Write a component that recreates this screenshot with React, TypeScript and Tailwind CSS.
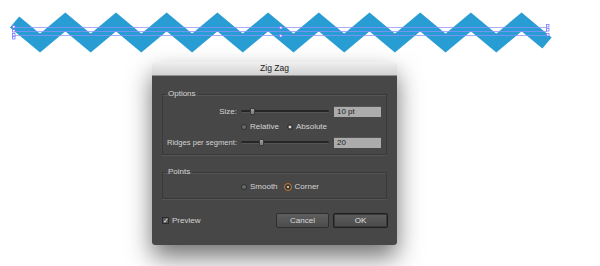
const font = { fontFamily: '"Liberation Sans", Arial, sans-serif' };

function Zigzag() {
  const pts: string[] = [];
  for (let k = 0; k <= 21; k++) {
    const x = 14.6 + 25.35 * k;
    const y = k % 2 === 0 ? 22 : 43;
    pts.push(`${x.toFixed(1)},${y}`);
  }
  const handles = [
    [12, 25], [12, 29], [12, 33], [12, 36],
    [279, 26], [279, 34],
    [546, 24], [546, 28], [546, 33],
  ];
  return (
    <svg width="600" height="62" viewBox="0 0 600 62" className="block">
      <polyline
        points={pts.join(" ")}
        fill="none"
        stroke="#289dd4"
        strokeWidth="14.5"
        strokeLinejoin="miter"
        strokeLinecap="butt"
      />
      <g stroke="#8f8fff" strokeWidth="1" opacity="0.75">
        <line x1="13" y1="27.5" x2="547" y2="27.5" />
        <line x1="13" y1="31.5" x2="547" y2="31.5" />
        <line x1="13" y1="35.5" x2="547" y2="35.5" />
      </g>
      <g fill="white" stroke="#7b7bff" strokeWidth="0.8">
        {handles.map(([x, y], i) => (
          <rect key={i} x={x + 0.5} y={y + 0.5} width="2.5" height="2.5" />
        ))}
      </g>
    </svg>
  );
}

function Slider({ pos }: { pos: number }) {
  return (
    <div className="relative flex h-[11px] w-[88px] items-center">
      <div className="h-[3px] w-full rounded-full border-b border-[#555] bg-[#262626]" />
      <div
        className="absolute top-[2px] h-[7px] w-[5px] rounded-[1px] border border-[#3a3a3a] bg-gradient-to-b from-[#a0a0a0] to-[#7a7a7a]"
        style={{ left: pos }}
      />
    </div>
  );
}

function Field({ value }: { value: string }) {
  return (
    <div className="flex h-[11px] w-[47px] items-center border-t border-[#555] bg-[#acacac] pl-[3px] text-[8px] leading-none text-[#1c1c1c]">
      {value}
    </div>
  );
}

function Radio({ checked, accent }: { checked?: boolean; accent?: boolean }) {
  if (accent) {
    return (
      <span className="flex h-[8px] w-[8px] items-center justify-center rounded-full border border-[#d0782a] bg-[#3a3a3a]">
        <span className="h-[2px] w-[2px] rounded-full bg-[#e8e8e8]" />
      </span>
    );
  }
  return (
    <span className="flex h-[6px] w-[6px] items-center justify-center rounded-full border border-[#2e2e2e] bg-[#6a6a6a]">
      {checked && <span className="h-[2px] w-[2px] rounded-full bg-white" />}
    </span>
  );
}

export default function App() {
  return (
    <div className="h-[266px] w-[600px] overflow-hidden bg-white" style={font}>
      <Zigzag />
      <div className="ml-[152px] flex h-[183px] w-[245px] flex-col overflow-hidden rounded-[3px] shadow-[0_12px_24px_rgba(0,0,0,0.55)]">
        <div className="flex h-[14px] items-center justify-center border-b border-[#8e8e8e] bg-gradient-to-b from-[#f0f0f0] to-[#d2d2d2] text-[8.5px] font-medium leading-none text-[#222]">
          Zig Zag
        </div>
        <div className="flex flex-1 flex-col bg-[#474747] px-[10px] pt-[13px] text-[8px] leading-none text-[#d4d4d4]">
          <fieldset className="border border-[#393939] pb-[6px] shadow-[0_1px_0_#555,inset_0_1px_0_#555]">
            <legend className="ml-[3px] h-[10px] px-[2px] leading-[10px]">Options</legend>
            <div className="flex flex-col gap-[5px] pt-[7px]">
              <div className="flex h-[11px] items-center">
                <span className="w-[74px] text-right">Size:</span>
                <span className="ml-[4px]"><Slider pos={9} /></span>
                <span className="ml-[5px]"><Field value="10 pt" /></span>
              </div>
              <div className="flex h-[10px] items-center pl-[78px]">
                <Radio />
                <span className="ml-[3px]">Relative</span>
                <span className="ml-[8px]"><Radio checked /></span>
                <span className="ml-[3px]">Absolute</span>
              </div>
              <div className="flex h-[11px] items-center">
                <span className="w-[74px] whitespace-nowrap text-right text-[7.6px]">Ridges per segment:</span>
                <span className="ml-[4px]"><Slider pos={18} /></span>
                <span className="ml-[5px]"><Field value="20" /></span>
              </div>
            </div>
          </fieldset>
          <fieldset className="mt-[12px] border border-[#393939] pb-[6px] shadow-[0_1px_0_#555,inset_0_1px_0_#555]">
            <legend className="ml-[3px] h-[10px] px-[2px] leading-[10px]">Points</legend>
            <div className="mt-[5px] flex h-[10px] items-center pl-[78px]">
              <Radio />
              <span className="ml-[3px]">Smooth</span>
              <span className="ml-[6px]"><Radio accent /></span>
              <span className="ml-[3px]">Corner</span>
            </div>
          </fieldset>
          <div className="mt-[14px] flex h-[15px] items-center">
            <span className="flex h-[7px] w-[7px] items-center justify-center border border-[#2a2a2a] bg-[#5a5a5a] text-[7px] leading-none text-[#eee]">
              ✓
            </span>
            <span className="ml-[3px]">Preview</span>
            <div className="ml-auto flex gap-[4px]">
              <button className="flex h-[15px] w-[53px] items-center justify-center rounded-[2px] border border-[#2f2f2f] bg-gradient-to-b from-[#5e5e5e] to-[#4c4c4c] text-[8px] leading-none text-[#d8d8d8]">
                Cancel
              </button>
              <button className="mr-[-1px] flex h-[15px] w-[55px] items-center justify-center rounded-[2px] border border-[#1e1e1e] bg-gradient-to-b from-[#5e5e5e] to-[#4a4a4a] text-[8px] leading-none text-[#e0e0e0] shadow-[inset_0_0_0_1px_#3a3a3a]">
                OK
              </button>
            </div>
          </div>
        </div>
      </div>
    </div>
  );
}
